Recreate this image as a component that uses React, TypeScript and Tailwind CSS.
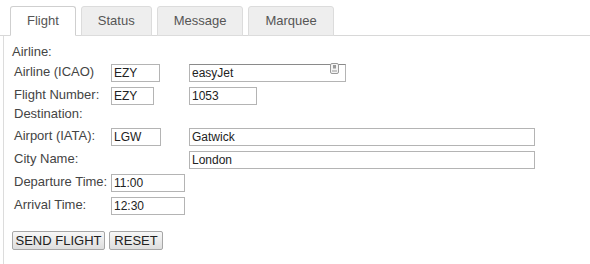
import React from "react";

const font = { fontFamily: '"Liberation Sans", Arial, sans-serif' };

const Tab = ({ label, active }: { label: string; active?: boolean }) => (
  <div
    className={
      active
        ? "h-[30px] px-4 flex items-center rounded-t-[3px] border border-[#cfcfcf] border-b-white bg-white text-[13px] text-[#555] -mb-px"
        : "h-[30px] px-4 flex items-center rounded-t-[3px] border border-[#dcdcdc] bg-[#eeeeee] text-[13px] text-[#555] -mb-px"
    }
  >
    {label}
  </div>
);

const Field = ({ value, w, icon }: { value: string; w: string; icon?: boolean }) => (
  <div className={"relative " + w}>
    <input
      readOnly
      defaultValue={value}
      className={
        icon
          ? "w-full h-[18px] px-[2px] border border-[#b4b4b4] border-t-[#8a8a8a] text-[12px] text-[#222] bg-white outline-none"
          : "w-full h-[18px] px-[2px] border border-[#b4b4b4] text-[12px] text-[#222] bg-white outline-none"
      }
    />
    {icon && (
      <svg className="absolute right-[7px] top-[3px]" width="9" height="11" viewBox="0 0 9 11">
        <rect x="0.5" y="0.5" width="8" height="10" rx="1.5" fill="#f4f4f4" stroke="#9a9a9a" />
        <rect x="3" y="2" width="3" height="3.5" fill="#9a9a9a" />
        <line x1="2" y1="8" x2="7" y2="8" stroke="#9a9a9a" />
      </svg>
    )}
  </div>
);

const Row = ({ label, children }: { label: string; children?: React.ReactNode }) => (
  <div className="flex items-center h-[23px] ml-[2px]">
    <div className="w-[97px] text-[13px] leading-4 text-[#444]">{label}</div>
    {children}
  </div>
);

export default function App() {
  return (
    <div className="w-[590px] h-[264px] bg-white overflow-hidden" style={font}>
      <div className="flex gap-[5px] pl-[10px] pt-[6px] border-b border-[#d8d8d8]">
        <Tab label="Flight" active />
        <Tab label="Status" />
        <Tab label="Message" />
        <Tab label="Marquee" />
      </div>
      <div className="ml-[3px] h-[228px] border-l border-[#dcdcdc] pl-[8px] pt-[8px]">
        <div className="h-4 text-[13px] leading-4 text-[#444]">Airline:</div>
        <Row label="Airline (ICAO)">
          <div className="w-[78px]">
            <Field value="EZY" w="w-[49px]" />
          </div>
          <Field value="easyJet" w="w-[157px]" icon />
        </Row>
        <Row label="Flight Number:">
          <div className="w-[78px]">
            <Field value="EZY" w="w-[43px]" />
          </div>
          <Field value="1053" w="w-[68px]" />
        </Row>
        <div className="h-[18px] ml-[2px] text-[13px] leading-4 text-[#444]">Destination:</div>
        <Row label="Airport (IATA):">
          <div className="w-[78px]">
            <Field value="LGW" w="w-[50px]" />
          </div>
          <Field value="Gatwick" w="w-[346px]" />
        </Row>
        <Row label="City Name:">
          <div className="w-[78px]" />
          <Field value="London" w="w-[346px]" />
        </Row>
        <Row label="Departure Time:">
          <Field value="11:00" w="w-[74px]" />
        </Row>
        <Row label="Arrival Time:">
          <Field value="12:30" w="w-[74px]" />
        </Row>
        <div className="flex gap-[4px] mt-[15px]">
          <button className="w-[93px] h-[19px] rounded-[2px] border border-[#a6a6a6] bg-gradient-to-b from-[#f7f7f7] to-[#dedede] text-[13px] leading-none text-[#222]">
            SEND FLIGHT
          </button>
          <button className="w-[54px] h-[19px] rounded-[2px] border border-[#a6a6a6] bg-gradient-to-b from-[#f7f7f7] to-[#dedede] text-[13px] leading-none text-[#222]">
            RESET
          </button>
        </div>
      </div>
    </div>
  );
}
